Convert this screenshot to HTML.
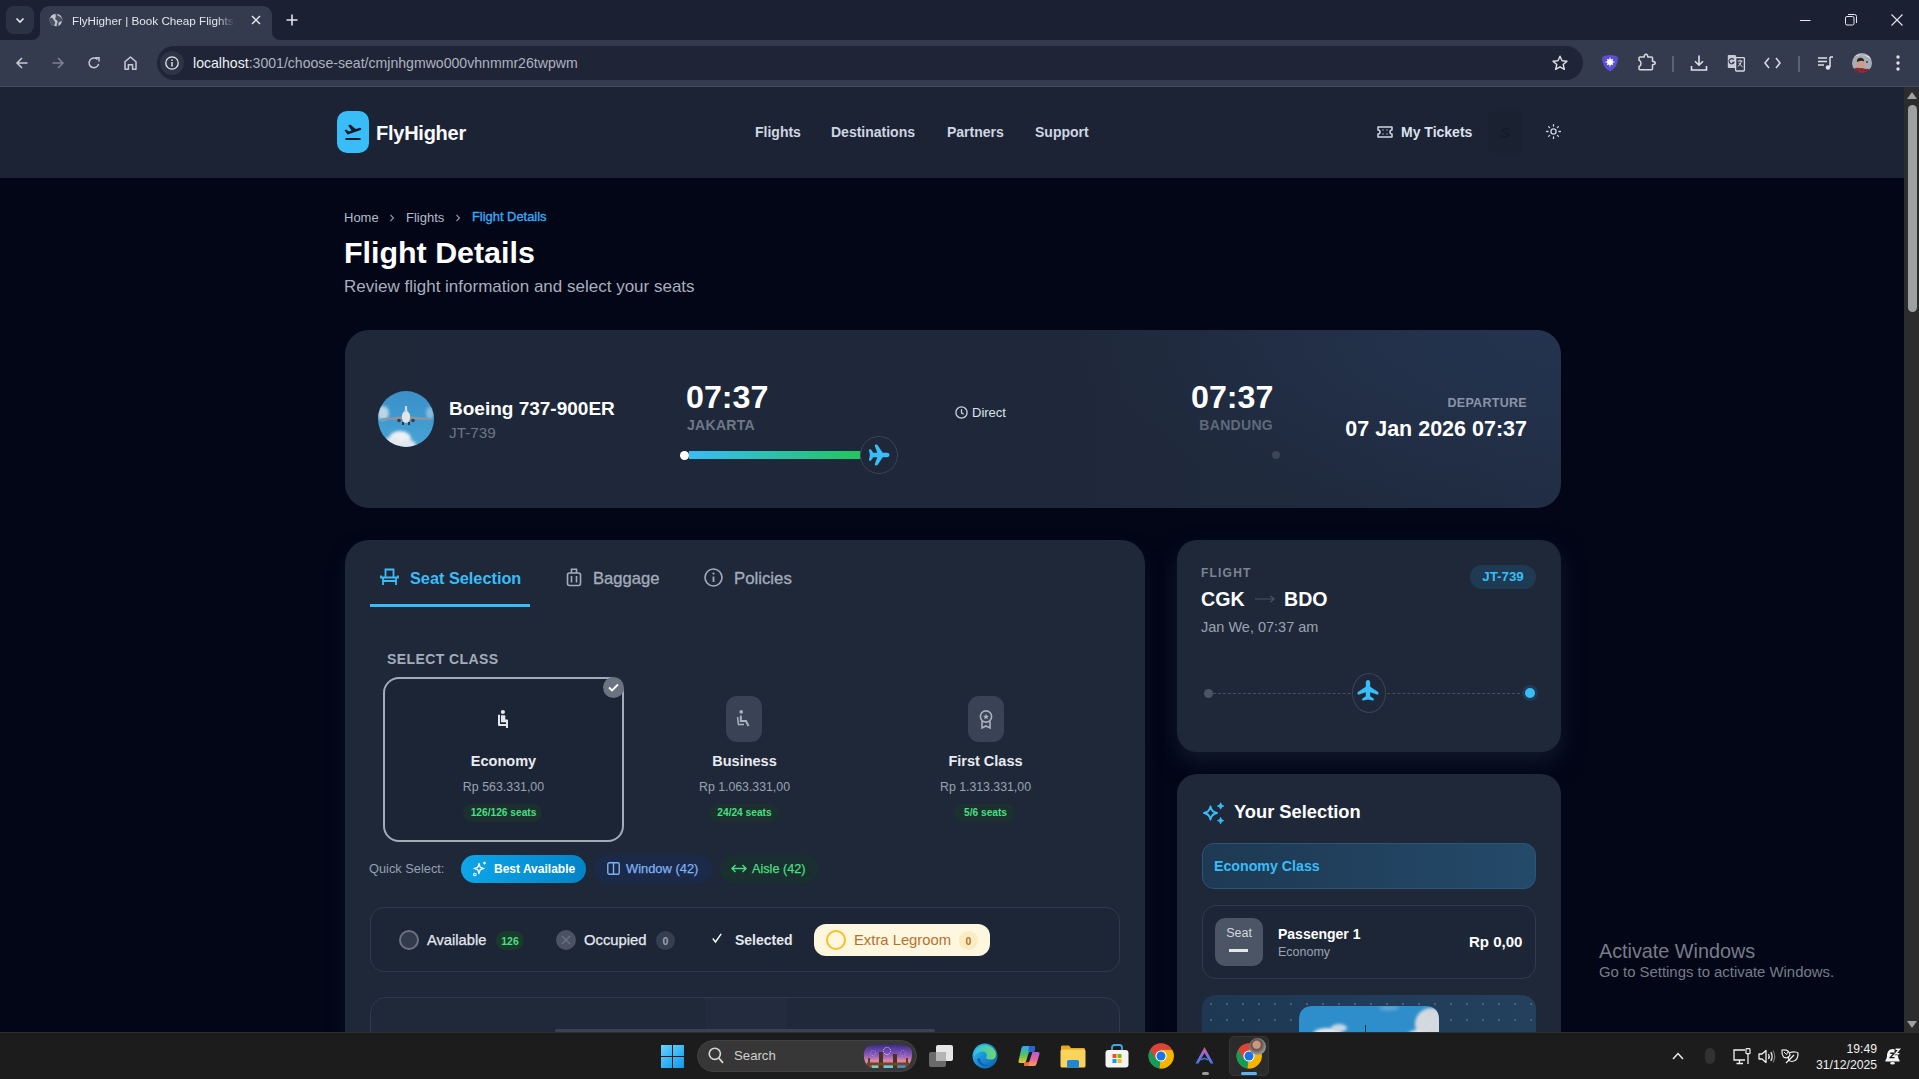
<!DOCTYPE html>
<html><head><meta charset="utf-8">
<style>
*{box-sizing:border-box;margin:0;padding:0}
html,body{width:1919px;height:1079px;overflow:hidden;background:#020617;font-family:"Liberation Sans",sans-serif}
.a{position:absolute}
.t{position:absolute;white-space:nowrap;line-height:1}
svg{position:absolute;overflow:visible}
/* chrome */
#tabstrip{left:0;top:0;width:1919px;height:40px;background:#1b2133}
#toolbar{left:0;top:40px;width:1919px;height:47px;background:#343b4e;border-bottom:1px solid #454c5e}
#omni{left:157px;top:46px;width:1426px;height:34px;border-radius:17px;background:#1f2536}
/* page */
#page{left:0;top:87px;width:1904px;height:945px;background:#020617;overflow:hidden}
#nav{left:0;top:0;width:1904px;height:91px;background:#1b2334}
#scroll{left:1904px;top:87px;width:15px;height:945px;background:#2c2c2c}
#taskbar{left:0;top:1032px;width:1919px;height:47px;background:#1c1c1c;border-top:1px solid #2e2e2e}
.card{position:absolute;background:#1e2637;border-radius:28px}
</style></head>
<body>
<!-- ============ BROWSER CHROME ============ -->
<div id="tabstrip" class="a"></div>
<div class="a" style="left:6px;top:6px;width:28px;height:28px;border-radius:8px;background:#2b3244"></div>
<svg style="left:14px;top:14px" width="12" height="12" viewBox="0 0 12 12"><path d="M2.5 4.5 L6 8 L9.5 4.5" fill="none" stroke="#e6e8ee" stroke-width="1.6"/></svg>
<!-- active tab -->
<div class="a" style="left:40px;top:6px;width:232px;height:40px;background:#343b4e;border-radius:9px 9px 0 0"></div>
<div class="a" style="left:32px;top:32px;width:8px;height:8px;background:#343b4e"></div>
<div class="a" style="left:32px;top:30px;width:8px;height:10px;background:#1b2133;border-radius:0 0 8px 0"></div>
<div class="a" style="left:272px;top:32px;width:8px;height:8px;background:#343b4e"></div>
<div class="a" style="left:272px;top:30px;width:8px;height:10px;background:#1b2133;border-radius:0 0 0 8px"></div>
<svg style="left:49px;top:13px" width="14" height="14" viewBox="0 0 14 14"><circle cx="7" cy="7" r="6.3" fill="#c4c7cf"/><path d="M1.2 5 C2.5 4.5 4 5 4.5 6.5 C5 8 6.5 8.2 6.2 10 C6 11.2 5.2 12 5.5 13.2 C3 12.6 1 10.2 0.9 7.3 Z M8.2 0.8 C8 2 8.8 3 10 3.2 C11.2 3.4 11.5 4.5 12.6 5 C13.2 6.2 13.2 7.5 13 8.5 C11.8 8.3 10.5 8.6 9.8 9.6 C9.2 10.5 9.8 11.8 9.4 13 C8.6 13.3 8 13.4 7.5 13.4 C8 12 7.5 10.6 8.3 9.5 C9 8.5 8.3 7.3 7.3 7 C6.2 6.8 6 5.6 6.5 4.6 C7 3.6 6.8 2 6.2 0.8 Z" fill="#343b4e" opacity="0.85"/></svg>
<div class="t" style="left:72px;top:15px;font-size:11.7px;color:#e3e5ea;width:168px;overflow:hidden;-webkit-mask-image:linear-gradient(90deg,#000 86%,transparent 97%)">FlyHigher | Book Cheap Flights for</div>
<svg style="left:251px;top:15px" width="10" height="10" viewBox="0 0 10 10"><path d="M1 1 L9 9 M9 1 L1 9" stroke="#e3e5ea" stroke-width="1.5"/></svg>
<svg style="left:286px;top:14px" width="12" height="12" viewBox="0 0 12 12"><path d="M6 0.5 V11.5 M0.5 6 H11.5" stroke="#e3e5ea" stroke-width="1.6"/></svg>
<!-- window controls -->
<svg style="left:1800px;top:15px" width="11" height="10" viewBox="0 0 11 10"><path d="M0 5.5 H10.5" stroke="#e6e8ee" stroke-width="1"/></svg>
<svg style="left:1845px;top:14px" width="12" height="12" viewBox="0 0 12 12"><rect x="0.5" y="2.5" width="8.5" height="8.5" rx="1.5" fill="none" stroke="#e6e8ee" stroke-width="1"/><path d="M3 0.5 H9.5 Q11.5 0.5 11.5 2.5 V9" fill="none" stroke="#e6e8ee" stroke-width="1"/></svg>
<svg style="left:1891px;top:14px" width="12" height="12" viewBox="0 0 12 12"><path d="M0.5 0.5 L11.5 11.5 M11.5 0.5 L0.5 11.5" stroke="#e6e8ee" stroke-width="1.1"/></svg>

<div id="toolbar" class="a"></div>
<svg style="left:16px;top:57px" width="12" height="12" viewBox="0 0 12 12"><path d="M11.5 6 H1.5 M6 1 L1 6 L6 11" fill="none" stroke="#c8cbd3" stroke-width="1.5"/></svg>
<svg style="left:52px;top:57px" width="12" height="12" viewBox="0 0 12 12"><path d="M0.5 6 H10.5 M6 1 L11 6 L6 11" fill="none" stroke="#7d8391" stroke-width="1.5"/></svg>
<svg style="left:88px;top:57px" width="12" height="12" viewBox="0 0 12 12"><path d="M10.6 6.8 A4.8 4.8 0 1 1 9.4 2.6" fill="none" stroke="#c8cbd3" stroke-width="1.5"/><path d="M7.2 0.8 H11 V4.6" fill="none" stroke="#c8cbd3" stroke-width="1.5"/></svg>
<svg style="left:124px;top:56px" width="13" height="14" viewBox="0 0 13 14"><path d="M1 13.2 V5.8 L6.5 1 L12 5.8 V13.2 H8.6 V8.8 H4.4 V13.2 Z" fill="none" stroke="#c8cbd3" stroke-width="1.5" stroke-linejoin="round"/></svg>
<div id="omni" class="a"></div>
<div class="a" style="left:160px;top:51px;width:24px;height:24px;border-radius:12px;background:#2d3446"></div>
<svg style="left:165px;top:56px" width="14" height="14" viewBox="0 0 14 14"><circle cx="7" cy="7" r="6.2" fill="none" stroke="#e6e8ee" stroke-width="1.3"/><rect x="6.3" y="6" width="1.4" height="4.5" fill="#e6e8ee"/><rect x="6.3" y="3.4" width="1.4" height="1.5" fill="#e6e8ee"/></svg>
<div class="t" style="left:193px;top:56px;font-size:14.1px;color:#aeb3bf"><span style="color:#eef0f4">localhost</span>:3001/choose-seat/cmjnhgmwo000vhnmmr26twpwm</div>
<svg style="left:1552px;top:55px" width="16" height="16" viewBox="0 0 16 16"><path d="M8 1.2 L10 5.8 L15 6.2 L11.2 9.5 L12.4 14.4 L8 11.8 L3.6 14.4 L4.8 9.5 L1 6.2 L6 5.8 Z" fill="none" stroke="#dfe2e8" stroke-width="1.4" stroke-linejoin="round"/></svg>
<!-- extension icons -->
<svg style="left:1601px;top:54px" width="18" height="18" viewBox="0 0 18 18"><path d="M1 3 Q9 -1 17 3 Q17 13 9 17.5 Q1 13 1 3 Z" fill="#5b4fd6"/><circle cx="9" cy="8" r="3" fill="#fff"/><path d="M9 3.5 V12.5 M4.5 8 H13.5 M6 5 L12 11 M12 5 L6 11" stroke="#fff" stroke-width="0.9"/></svg>
<svg style="left:1637px;top:53px" width="20" height="18" viewBox="0 0 20 18"><path d="M3 4 H7.2 Q7.2 1.2 9 1.2 Q10.8 1.2 10.8 4 H14.5 Q15.5 4 15.5 5 V8.2 Q18.2 8.5 18.2 10 Q18.2 11.5 15.5 11.8 V15.8 Q15.5 16.8 14.5 16.8 H3 Q2 16.8 2 15.8 V13.5 Q4 12.8 4 10.4 Q4 8 2 7.3 V5 Q2 4 3 4 Z" fill="none" stroke="#d6d9e0" stroke-width="1.5" stroke-linejoin="round"/></svg>
<div class="a" style="left:1672px;top:56px;width:2px;height:16px;background:#5b6170"></div>
<svg style="left:1690px;top:54px" width="18" height="18" viewBox="0 0 18 18"><path d="M9 1.5 V11 M5 7.2 L9 11.2 L13 7.2 M1.5 12 V16 H16.5 V12" fill="none" stroke="#dfe2e8" stroke-width="1.6"/></svg>
<svg style="left:1727px;top:54px" width="19" height="18" viewBox="0 0 19 18"><path d="M1.5 1 H8.5 L9.5 3.5 V14 H1.5 Q0.8 14 0.8 13.3 V1.7 Q0.8 1 1.5 1 Z" fill="#c9ccd4"/><path d="M6.8 5.6 A2.6 2.6 0 1 0 7 8.4 H5.2" fill="none" stroke="#343b4e" stroke-width="1.2"/><rect x="8.6" y="3.6" width="8.8" height="13.4" rx="0.8" fill="#343b4e" stroke="#d6d9e0" stroke-width="1.3"/><path d="M10.8 7 H15.4 M13 5.8 V7 M14.6 7 Q13.5 11 10.8 12.4 M11.8 8.8 Q13 11.4 15.6 12.8" fill="none" stroke="#d6d9e0" stroke-width="1"/></svg>
<svg style="left:1764px;top:57px" width="17" height="12" viewBox="0 0 17 12"><path d="M5 1 L1 6 L5 11 M12 1 L16 6 L12 11" fill="none" stroke="#d6d9e0" stroke-width="1.6"/></svg>
<div class="a" style="left:1798px;top:56px;width:2px;height:16px;background:#5b6170"></div>
<svg style="left:1817px;top:55px" width="17" height="16" viewBox="0 0 17 16"><path d="M1 3 H10 M1 6.5 H10 M1 10 H7" stroke="#dfe2e8" stroke-width="1.5"/><path d="M13 2 V12" stroke="#dfe2e8" stroke-width="1.5"/><circle cx="11" cy="12.5" r="2.3" fill="#dfe2e8"/><path d="M13 2 H16" stroke="#dfe2e8" stroke-width="1.5"/></svg>
<svg style="left:1852px;top:53px" width="20" height="20" viewBox="0 0 20 20"><defs><clipPath id="avp"><circle cx="10" cy="10" r="10"/></clipPath><filter id="avb"><feGaussianBlur stdDeviation="0.6"/></filter></defs><g clip-path="url(#avp)" filter="url(#avb)"><rect width="20" height="20" fill="#a9adb4"/><path d="M2 4 Q10 -1 19 6 L19 3 L2 1 Z" fill="#e2e5e8"/><ellipse cx="8.5" cy="11.5" rx="3.6" ry="4.2" fill="#d39a86"/><path d="M4.8 9 Q5 4.8 8.5 4.8 Q12 4.8 12.2 8.5 Q10 6.8 5 9 Z" fill="#2a2526"/><path d="M0 20 Q1 14 7 15 Q11 14.5 14 16 Q19 15 20 20 Z" fill="#8c2f34"/><path d="M5 17 l1.5 1.5 M9 16.5 l1.5 1.5 M13 17 l1.5 1.5" stroke="#4a1a1c" stroke-width="0.9"/><circle cx="15" cy="9" r="1" fill="#3a3c40"/></g></svg>
<svg style="left:1896px;top:55px" width="4" height="16" viewBox="0 0 4 16"><circle cx="2" cy="2" r="1.7" fill="#dfe2e8"/><circle cx="2" cy="8" r="1.7" fill="#dfe2e8"/><circle cx="2" cy="14" r="1.7" fill="#dfe2e8"/></svg>

<!-- ============ PAGE ============ -->
<div id="page" class="a">
  <div id="nav" class="a"></div>
  <!-- logo -->
  <div class="a" style="left:337px;top:24px;width:32px;height:42px;border-radius:10px;background:#38bdf8"></div>
  <svg style="left:343px;top:37px" width="20" height="17" viewBox="0 0 20 17"><path d="M1.5 6.2 L3.2 5.4 L5.6 7.4 L8.6 6.4 L5.2 1.4 L7.3 0.6 L12.6 5.1 L16.3 3.9 C17.6 3.5 18.6 4.4 18.2 5.3 C17.9 6 17.1 6.3 16.3 6.6 L4.6 10.6 Z" fill="#0f172a"/><rect x="2.5" y="14" width="15" height="2" fill="#0f172a"/></svg>
  <div class="t" style="left:376px;top:36px;font-size:20px;font-weight:700;color:#f8fafc;letter-spacing:-0.25px">FlyHigher</div>
  <!-- nav links -->
  <div class="t" style="left:755px;top:38px;font-size:14px;font-weight:700;color:#cfd6e2">Flights</div>
  <div class="t" style="left:831px;top:38px;font-size:14px;font-weight:700;color:#cfd6e2">Destinations</div>
  <div class="t" style="left:947px;top:38px;font-size:14px;font-weight:700;color:#cfd6e2">Partners</div>
  <div class="t" style="left:1035px;top:38px;font-size:14px;font-weight:700;color:#cfd6e2">Support</div>
  <svg style="left:1377px;top:39px" width="16" height="12" viewBox="0 0 16 12"><path d="M1 1 H15 V4 A2 2 0 0 0 15 8 V11 H1 V8 A2 2 0 0 0 1 4 Z" fill="none" stroke="#cfd6e2" stroke-width="1.5" stroke-linejoin="round"/><path d="M6 3.5 V4.5 M6 7.5 V8.5 M10 3.5 V4.5 M10 7.5 V8.5" stroke="#cfd6e2" stroke-width="1.3"/></svg>
  <div class="t" style="left:1401px;top:38px;font-size:14px;font-weight:700;color:#dbe2ec">My Tickets</div>
  <div class="a" style="left:1488px;top:24px;width:34px;height:42px;border-radius:6px;background:#1a2131"></div>
  <div class="t" style="left:1500px;top:38px;font-size:15px;font-weight:700;font-style:italic;color:#151b29">S</div>
  <svg style="left:1546px;top:37px" width="15" height="15" viewBox="0 0 15 15"><circle cx="7.5" cy="7.5" r="2.6" fill="none" stroke="#cfd6e2" stroke-width="1.3"/><path d="M7.5 0.6 V2 M7.5 13 V14.4 M0.6 7.5 H2 M13 7.5 H14.4 M2.6 2.6 L3.6 3.6 M11.4 11.4 L12.4 12.4 M2.6 12.4 L3.6 11.4 M11.4 3.6 L12.4 2.6" stroke="#cfd6e2" stroke-width="1.3" stroke-linecap="round"/></svg>

  <!-- breadcrumb -->
  <div class="t" style="left:344px;top:124px;font-size:13px;color:#b4bccb">Home</div>
  <svg style="left:389px;top:127px" width="6" height="8" viewBox="0 0 6 8"><path d="M1.5 1 L4.5 4 L1.5 7" fill="none" stroke="#8b93a3" stroke-width="1.2"/></svg>
  <div class="t" style="left:406px;top:124px;font-size:13px;color:#b4bccb">Flights</div>
  <svg style="left:455px;top:127px" width="6" height="8" viewBox="0 0 6 8"><path d="M1.5 1 L4.5 4 L1.5 7" fill="none" stroke="#8b93a3" stroke-width="1.2"/></svg>
  <div class="t" style="left:472px;top:124px;font-size:12.9px;color:#3aa9f2;-webkit-text-stroke:0.35px #3aa9f2">Flight Details</div>
  <div class="t" style="left:344px;top:150px;font-size:30.4px;font-weight:700;color:#ffffff">Flight Details</div>
  <div class="t" style="left:344px;top:191px;font-size:17px;color:#a7afbd">Review flight information and select your seats</div>

  <!-- flight summary card -->
  <div class="a" style="left:345px;top:243px;width:1216px;height:178px;border-radius:24px;background:radial-gradient(ellipse 40% 110% at 100% 0%,rgba(36,52,80,0.95) 0%,rgba(36,52,80,0) 100%),linear-gradient(90deg,#1e2839 0%,#1f283a 60%,#202c42 100%)"></div>
  <svg style="left:378px;top:304px" width="56" height="56" viewBox="0 0 56 56"><defs><clipPath id="avc"><circle cx="28" cy="28" r="28"/></clipPath><linearGradient id="sky" x1="0" y1="0" x2="0" y2="1"><stop offset="0" stop-color="#3c8fc8"/><stop offset="0.5" stop-color="#3e9ad0"/><stop offset="1" stop-color="#4aa3d4"/></linearGradient><filter id="bl" x="-50%" y="-50%" width="200%" height="200%"><feGaussianBlur stdDeviation="1.6"/></filter><filter id="bl2"><feGaussianBlur stdDeviation="0.5"/></filter></defs><g clip-path="url(#avc)"><rect width="56" height="56" fill="url(#sky)"/><g filter="url(#bl)"><ellipse cx="22" cy="48" rx="11" ry="8" fill="#eef0f4"/><ellipse cx="14" cy="52" rx="8" ry="6" fill="#e6e9ef"/><ellipse cx="30" cy="54" rx="8" ry="5" fill="#dfe6ee"/><ellipse cx="5" cy="22" rx="6" ry="7" fill="#c9dbe8" opacity="0.9"/><ellipse cx="52" cy="22" rx="4" ry="6" fill="#bcd4e6" opacity="0.6"/></g><g filter="url(#bl2)"><path d="M3 27.5 L22 25.5 L34 25.5 L53 27.5 L53 29 L34 28.5 L22 28.5 L3 29 Z" fill="#8d949c"/><ellipse cx="28" cy="26" rx="4.2" ry="6" fill="#e2e4e6"/><path d="M27 15 L29 15 L29.5 21 L26.5 21 Z" fill="#d0d4d8"/><circle cx="21" cy="29.5" r="1.8" fill="#3a3e44"/><circle cx="35" cy="29.5" r="1.8" fill="#3a3e44"/><path d="M24 31 h2 v3 h-2z M30 31 h2 v3 h-2z" fill="#2e3a44"/></g></g></svg>
  <div class="t" style="left:449px;top:312px;font-size:19px;font-weight:700;color:#ffffff">Boeing 737-900ER</div>
  <div class="t" style="left:449px;top:338px;font-size:15.3px;color:#6b7587">JT-739</div>

  <div class="t" style="left:686px;top:294px;font-size:32.2px;font-weight:700;color:#ffffff">07:37</div>
  <div class="t" style="left:687px;top:331px;font-size:14px;font-weight:700;color:#6f7889;letter-spacing:0.3px">JAKARTA</div>
  <div class="a" style="left:689px;top:364px;width:172px;height:8px;background:linear-gradient(90deg,#38bdf8,#22c55e)"></div>
  <div class="a" style="left:680px;top:364px;width:9px;height:9px;border-radius:5px;background:#fff"></div>
  <div class="a" style="left:860px;top:349px;width:38px;height:38px;border-radius:19px;border:1px solid #3a4357;background:#1e2839"></div>
  <svg style="left:868px;top:357px" width="22" height="22" viewBox="0 0 22 22"><g transform="rotate(90 11 11) translate(0 0.5)"><path d="M11 0 C12.3 0 13.2 1 13.2 2.5 V6.8 L20.8 11.8 C21.6 12.3 21.8 13.2 21.4 14 C21.1 14.6 20.4 14.8 19.8 14.6 L13.2 12.2 V16.2 L16.2 18.3 C16.8 18.7 17 19.4 16.7 20 C16.5 20.4 16 20.6 15.5 20.5 L11 19.6 L6.5 20.5 C6 20.6 5.5 20.4 5.3 20 C5 19.4 5.2 18.7 5.8 18.3 L8.8 16.2 V12.2 L2.2 14.6 C1.6 14.8 0.9 14.6 0.6 14 C0.2 13.2 0.4 12.3 1.2 11.8 L8.8 6.8 V2.5 C8.8 1 9.7 0 11 0 Z" fill="#38bdf8"/></g></svg>

  <svg style="left:955px;top:319px" width="13" height="13" viewBox="0 0 13 13"><circle cx="6.5" cy="6.5" r="5.6" fill="none" stroke="#cfd6e2" stroke-width="1.3"/><path d="M6.5 3.2 V6.8 L8.6 8.2" fill="none" stroke="#cfd6e2" stroke-width="1.3"/></svg>
  <div class="t" style="left:972px;top:319px;font-size:13px;color:#dbe2ec">Direct</div>

  <div class="t" style="left:1191px;top:294px;font-size:32.2px;font-weight:700;color:#ffffff">07:37</div>
  <div class="t" style="left:1073px;width:200px;text-align:right;top:331px;font-size:14px;font-weight:700;color:#5f697b;letter-spacing:0.3px">BANDUNG</div>
  <div class="a" style="left:1272px;top:364px;width:8px;height:8px;border-radius:4px;background:#3d4557"></div>

  <div class="t" style="left:1227px;width:300px;text-align:right;top:310px;font-size:12.5px;font-weight:700;color:#8c95a6;letter-spacing:0.3px">DEPARTURE</div>
  <div class="t" style="left:1227px;width:300px;text-align:right;top:332px;font-size:21.5px;font-weight:700;color:#ffffff">07 Jan 2026 07:37</div>
  <!-- ===== main panel ===== -->
  <div class="a" style="left:345px;top:453px;width:800px;height:520px;border-radius:24px;background:#1f2839;box-shadow:0 8px 18px rgba(30,41,59,0.35)"></div>
  <!-- tabs -->
  <svg style="left:380px;top:481px" width="19" height="18" viewBox="0 0 19 18"><path d="M5.5 9 V1.5 H13.5 V9" fill="none" stroke="#38bdf8" stroke-width="1.8"/><path d="M1 7.5 V9.5 H18 V7.5 M3 9.5 V17 M16 9.5 V17 M3 13 H16" fill="none" stroke="#38bdf8" stroke-width="1.8"/></svg>
  <div class="t" style="left:410px;top:483px;font-size:16.3px;font-weight:700;color:#38bdf8">Seat Selection</div>
  <div class="a" style="left:370px;top:517px;width:160px;height:3px;background:#38bdf8"></div>
  <svg style="left:566px;top:481px" width="16" height="19" viewBox="0 0 16 19"><rect x="1.5" y="5" width="13" height="12.5" rx="2" fill="none" stroke="#a4acba" stroke-width="1.6"/><path d="M5.5 5 V1.2 H10.5 V5 M5.5 8 V14.5 M10.5 8 V14.5" fill="none" stroke="#a4acba" stroke-width="1.6"/></svg>
  <div class="t" style="left:593px;top:484px;font-size:16.6px;color:#a4acba;-webkit-text-stroke:0.3px #a4acba">Baggage</div>
  <svg style="left:704px;top:481px" width="19" height="19" viewBox="0 0 19 19"><circle cx="9.5" cy="9.5" r="8.5" fill="none" stroke="#a4acba" stroke-width="1.6"/><path d="M9.5 8.5 V14" stroke="#a4acba" stroke-width="1.8"/><circle cx="9.5" cy="5.6" r="1.1" fill="#a4acba"/></svg>
  <div class="t" style="left:734px;top:484px;font-size:16.8px;color:#a4acba;-webkit-text-stroke:0.3px #a4acba">Policies</div>

  <div class="t" style="left:387px;top:565px;font-size:14px;font-weight:700;color:#a4acba;letter-spacing:0.42px">SELECT CLASS</div>
  <!-- economy card -->
  <div class="a" style="left:383px;top:590px;width:241px;height:165px;border-radius:16px;border:2px solid #a3abb9;background:#1c2535"></div>
  <div class="a" style="left:603px;top:590px;width:21px;height:21px;border-radius:11px;background:#6b7280"></div>
  <svg style="left:608px;top:596px" width="11" height="9" viewBox="0 0 11 9"><path d="M1 4.5 L4 7.5 L10 1.5" fill="none" stroke="#fff" stroke-width="1.8"/></svg>
  <svg style="left:495px;top:621px" width="16" height="21" viewBox="0 0 16 21"><circle cx="7.9" cy="4" r="2.1" fill="#e5e7eb"/><path d="M4 6.8 V17 H12 V20" fill="none" stroke="#e5e7eb" stroke-width="2" stroke-linejoin="round"/><path d="M6 7.2 H9.6 Q10.3 7.2 10.3 8 V11.4 H12.2 Q13 11.4 13 12.2 V17 H11 V14.3 H6 Z" fill="#e5e7eb"/></svg>
  <div class="t" style="left:383px;width:241px;text-align:center;top:667px;font-size:14.5px;font-weight:700;color:#e8ebf0">Economy</div>
  <div class="t" style="left:383px;width:241px;text-align:center;top:694px;font-size:12.4px;color:#9aa3b2">Rp 563.331,00</div>
  <div class="a" style="left:463px;top:717px;width:79px;height:18px;border-radius:9px;background:#1b302f"></div>
  <div class="t" style="left:383px;width:241px;text-align:center;top:721px;font-size:10.2px;font-weight:700;color:#4ade80">126/126 seats</div>
  <!-- business -->
  <div class="a" style="left:726px;top:609px;width:36px;height:46px;border-radius:11px;background:#394355"></div>
  <svg style="left:736px;top:623px" width="17" height="18" viewBox="0 0 17 18"><circle cx="5.2" cy="1.9" r="1.8" fill="#aab2bf"/><path d="M4.8 5.5 V11 H10 L12.5 16" fill="none" stroke="#aab2bf" stroke-width="2"/><path d="M1.5 7 L2.5 14.5 H8" fill="none" stroke="#aab2bf" stroke-width="1.5"/></svg>
  <div class="t" style="left:624px;width:241px;text-align:center;top:667px;font-size:14.5px;font-weight:700;color:#e8ebf0">Business</div>
  <div class="t" style="left:624px;width:241px;text-align:center;top:694px;font-size:12.3px;color:#9aa3b2">Rp 1.063.331,00</div>
  <div class="a" style="left:709px;top:717px;width:70px;height:18px;border-radius:9px;background:#1b302f"></div>
  <div class="t" style="left:624px;width:241px;text-align:center;top:721px;font-size:10.2px;font-weight:700;color:#4ade80">24/24 seats</div>
  <!-- first -->
  <div class="a" style="left:968px;top:609px;width:36px;height:46px;border-radius:11px;background:#394355"></div>
  <svg style="left:978px;top:623px" width="16" height="19" viewBox="0 0 16 19"><circle cx="8" cy="6.5" r="5.6" fill="none" stroke="#aab2bf" stroke-width="1.6"/><path d="M8 3.8 L8.9 5.7 L10.9 5.9 L9.4 7.2 L9.8 9.2 L8 8.2 L6.2 9.2 L6.6 7.2 L5.1 5.9 L7.1 5.7 Z" fill="#aab2bf"/><path d="M4 11 V18 L8 16 L12 18 V11" fill="none" stroke="#aab2bf" stroke-width="1.6"/></svg>
  <div class="t" style="left:865px;width:241px;text-align:center;top:667px;font-size:14.5px;font-weight:700;color:#e8ebf0">First Class</div>
  <div class="t" style="left:865px;width:241px;text-align:center;top:694px;font-size:12.3px;color:#9aa3b2">Rp 1.313.331,00</div>
  <div class="a" style="left:954px;top:717px;width:62px;height:18px;border-radius:9px;background:#1b302f"></div>
  <div class="t" style="left:865px;width:241px;text-align:center;top:721px;font-size:10.2px;font-weight:700;color:#4ade80">5/6 seats</div>

  <!-- quick select -->
  <div class="t" style="left:369px;top:776px;font-size:12.8px;color:#94a0b0">Quick Select:</div>
  <div class="a" style="left:461px;top:768px;width:125px;height:28px;border-radius:14px;background:linear-gradient(90deg,#0ea5e9,#0284c7)"></div>
  <svg style="left:472px;top:774px" width="16" height="16" viewBox="0 0 16 16"><path d="M7 2.5 L8.2 6.3 L12 7.5 L8.2 8.7 L7 12.5 L5.8 8.7 L2 7.5 L5.8 6.3 Z" fill="none" stroke="#fff" stroke-width="1.3" stroke-linejoin="round"/><path d="M12.5 0.8 V3.6 M11.1 2.2 H13.9" stroke="#fff" stroke-width="1.2"/><circle cx="2.8" cy="13.5" r="1.3" fill="none" stroke="#fff" stroke-width="1.1"/></svg>
  <div class="t" style="left:494px;top:776px;font-size:12px;font-weight:700;color:#ffffff">Best Available</div>
  <div class="a" style="left:594px;top:768px;width:118px;height:28px;border-radius:14px;background:#1b2a48"></div>
  <svg style="left:607px;top:775px" width="13" height="13" viewBox="0 0 13 13"><rect x="0.8" y="0.8" width="11.4" height="11.4" rx="1.5" fill="none" stroke="#7fb2f5" stroke-width="1.4"/><path d="M6.5 0.8 V12.2" stroke="#7fb2f5" stroke-width="1.4"/></svg>
  <div class="t" style="left:626px;top:776px;font-size:12.9px;color:#7fb2f5;-webkit-text-stroke:0.25px #7fb2f5">Window (42)</div>
  <div class="a" style="left:720px;top:768px;width:98px;height:28px;border-radius:14px;background:#1a3030"></div>
  <svg style="left:731px;top:776px" width="16" height="11" viewBox="0 0 16 11"><path d="M1 5.5 H15 M4.5 2 L1 5.5 L4.5 9 M11.5 2 L15 5.5 L11.5 9" fill="none" stroke="#4ade80" stroke-width="1.4"/></svg>
  <div class="t" style="left:752px;top:776px;font-size:12.7px;color:#4ade80;-webkit-text-stroke:0.25px #4ade80">Aisle (42)</div>

  <!-- legend -->
  <div class="a" style="left:370px;top:820px;width:750px;height:65px;border-radius:14px;border:1px solid #313a4c;background:#1d2636"></div>
  <div class="a" style="left:399px;top:843px;width:20px;height:20px;border-radius:10px;border:2px solid #6b7280;background:#323b4b"></div>
  <div class="t" style="left:427px;top:846px;font-size:14.7px;color:#e5e8ee;-webkit-text-stroke:0.25px #e5e8ee">Available</div>
  <div class="a" style="left:496px;top:844px;width:28px;height:19px;border-radius:10px;background:#1a3a2c"></div>
  <div class="t" style="left:496px;width:28px;text-align:center;top:849px;font-size:10.5px;font-weight:700;color:#4ade80">126</div>
  <div class="a" style="left:556px;top:843px;width:20px;height:20px;border-radius:10px;background:#4b5363"></div>
  <svg style="left:560px;top:847px" width="12" height="12" viewBox="0 0 12 12"><path d="M2 2 L10 10 M10 2 L2 10" stroke="#6b7383" stroke-width="1.2"/></svg>
  <div class="t" style="left:584px;top:846px;font-size:14.8px;color:#e5e8ee;-webkit-text-stroke:0.25px #e5e8ee">Occupied</div>
  <div class="a" style="left:656px;top:844px;width:19px;height:19px;border-radius:10px;background:#363f50"></div>
  <div class="t" style="left:656px;width:19px;text-align:center;top:849px;font-size:10.5px;font-weight:700;color:#9ca3af">0</div>
  <svg style="left:712px;top:846px" width="10" height="10" viewBox="0 0 10 10"><path d="M0.8 5.5 L3.5 9 L9.2 0.8" fill="none" stroke="#ffffff" stroke-width="1.4"/></svg>
  <div class="t" style="left:735px;top:846px;font-size:14px;font-weight:700;color:#e5e8ee">Selected</div>
  <div class="a" style="left:814px;top:837px;width:176px;height:32px;border-radius:12px;background:#fdf7e0"></div>
  <div class="a" style="left:826px;top:843px;width:20px;height:20px;border-radius:10px;border:2px solid #fbbf24"></div>
  <div class="t" style="left:854px;top:846px;font-size:14.8px;color:#b7702c">Extra Legroom</div>
  <div class="a" style="left:959px;top:844px;width:19px;height:19px;border-radius:10px;background:#fcecc2"></div>
  <div class="t" style="left:959px;width:19px;text-align:center;top:849px;font-size:10.5px;font-weight:700;color:#b7702c">0</div>

  <!-- seatmap box (cut) -->
  <div class="a" style="left:370px;top:910px;width:750px;height:60px;border-radius:16px;border:1px solid #313a4c;background:#1f293a"></div>
  <div class="a" style="left:705px;top:911px;width:82px;height:34px;background:#222c3e"></div>
  <div class="a" style="left:555px;top:942px;width:380px;height:3px;border-radius:2px;background:#3a4356"></div>

  <!-- ===== right column ===== -->
  <div class="a" style="left:1177px;top:453px;width:384px;height:212px;border-radius:20px;background:#1f2839;box-shadow:0 10px 22px rgba(30,41,59,0.55)"></div>
  <div class="t" style="left:1201px;top:480px;font-size:12px;font-weight:700;color:#7b8494;letter-spacing:1.2px">FLIGHT</div>
  <div class="a" style="left:1470px;top:478px;width:66px;height:24px;border-radius:12px;background:#1f3b53"></div>
  <div class="t" style="left:1470px;width:66px;text-align:center;top:483px;font-size:13.3px;font-weight:700;color:#38bdf8">JT-739</div>
  <div class="t" style="left:1201px;top:503px;font-size:19.6px;font-weight:700;color:#ffffff">CGK</div>
  <svg style="left:1255px;top:508px" width="20" height="8" viewBox="0 0 20 8"><path d="M0 4 H19 M15.5 1 L19 4 L15.5 7" fill="none" stroke="#4b5465" stroke-width="1.2"/></svg>
  <div class="t" style="left:1284px;top:503px;font-size:19.6px;font-weight:700;color:#ffffff">BDO</div>
  <div class="t" style="left:1201px;top:533px;font-size:14.5px;color:#9aa3b2">Jan We, 07:37 am</div>
  <div class="a" style="left:1208px;top:606px;width:322px;height:0;border-top:1px dashed #475063"></div>
  <div class="a" style="left:1204px;top:602px;width:9px;height:9px;border-radius:5px;background:#4b5465"></div>
  <div class="a" style="left:1522px;top:598px;width:16px;height:16px;border-radius:8px;background:#1e3a55"></div>
  <div class="a" style="left:1525px;top:601px;width:10px;height:10px;border-radius:5px;background:#38bdf8"></div>
  <div class="a" style="left:1352px;top:586px;width:34px;height:40px;border-radius:50%;border:1px solid #3a4357;background:#1f2839"></div>
  <svg style="left:1357px;top:593px" width="22" height="21" viewBox="0 0 22 21"><path d="M11 0 C12.3 0 13.2 1 13.2 2.5 V6.8 L20.8 11.8 C21.6 12.3 21.8 13.2 21.4 14 C21.1 14.6 20.4 14.8 19.8 14.6 L13.2 12.2 V16.2 L16.2 18.3 C16.8 18.7 17 19.4 16.7 20 C16.5 20.4 16 20.6 15.5 20.5 L11 19.6 L6.5 20.5 C6 20.6 5.5 20.4 5.3 20 C5 19.4 5.2 18.7 5.8 18.3 L8.8 16.2 V12.2 L2.2 14.6 C1.6 14.8 0.9 14.6 0.6 14 C0.2 13.2 0.4 12.3 1.2 11.8 L8.8 6.8 V2.5 C8.8 1 9.7 0 11 0 Z" fill="#38bdf8"/></svg>

  <div class="a" style="left:1177px;top:687px;width:384px;height:300px;border-radius:20px;background:#1f2839"></div>
  <svg style="left:1200px;top:715px" width="26" height="24" viewBox="0 0 26 24"><path d="M10.5 4.5 Q11.5 10 17 11 Q11.5 12 10.5 17.5 Q9.5 12 4 11 Q9.5 10 10.5 4.5 Z" fill="none" stroke="#38bdf8" stroke-width="1.8" stroke-linejoin="round"/><path d="M20.6 0.8 Q21 3.6 23.8 4 Q21 4.4 20.6 7.2 Q20.2 4.4 17.4 4 Q20.2 3.6 20.6 0.8 Z M20.6 15.4 Q21 18.2 23.8 18.6 Q21 19 20.6 21.8 Q20.2 19 17.4 18.6 Q20.2 18.2 20.6 15.4 Z" fill="#38bdf8" stroke="#38bdf8" stroke-width="0.8" stroke-linejoin="round"/></svg>
  <div class="t" style="left:1234px;top:716px;font-size:18.3px;font-weight:700;color:#ffffff">Your Selection</div>
  <div class="a" style="left:1202px;top:756px;width:334px;height:46px;border-radius:12px;border:1px solid #2c5677;background:linear-gradient(90deg,#1e3953,#244a6a)"></div>
  <div class="t" style="left:1214px;top:772px;font-size:14.2px;font-weight:700;color:#38bdf8">Economy Class</div>
  <div class="a" style="left:1202px;top:818px;width:334px;height:74px;border-radius:14px;border:1px solid #323b4d;background:#1d2636"></div>
  <div class="a" style="left:1215px;top:831px;width:48px;height:48px;border-radius:10px;background:#4b5565"></div>
  <div class="t" style="left:1215px;width:48px;text-align:center;top:840px;font-size:12.5px;color:#d4d8df">Seat</div>
  <div class="a" style="left:1229px;top:862px;width:19px;height:3px;background:#e5e7eb"></div>
  <div class="t" style="left:1278px;top:840px;font-size:14px;font-weight:700;color:#ffffff">Passenger 1</div>
  <div class="t" style="left:1278px;top:859px;font-size:12.5px;color:#9aa3b2">Economy</div>
  <div class="t" style="left:1469px;top:847px;font-size:15px;font-weight:700;color:#ffffff">Rp 0,00</div>
  <div class="a" style="left:1202px;top:908px;width:334px;height:60px;border-radius:14px;background-color:#1f3a55;background-image:radial-gradient(circle,#42617f 0.8px,transparent 1.3px),linear-gradient(90deg,#1e3853,#23405d);background-size:16px 16px,100% 100%;background-position:1px 1px,0 0"></div>
  <svg style="left:1299px;top:919px" width="140" height="30" viewBox="0 0 140 30"><defs><clipPath id="imc"><path d="M0 30 V14 Q0 0 14 0 H126 Q140 0 140 14 V30 Z"/></clipPath><filter id="cb"><feGaussianBlur stdDeviation="1.8"/></filter></defs><g clip-path="url(#imc)"><rect width="140" height="30" fill="#2d8ecb"/><g filter="url(#cb)"><ellipse cx="28" cy="28" rx="14" ry="6" fill="#e3e8ee"/><ellipse cx="40" cy="22" rx="8" ry="4" fill="#c9d6e2"/><ellipse cx="132" cy="18" rx="16" ry="16" fill="#d3d9de"/><ellipse cx="118" cy="30" rx="10" ry="6" fill="#e0e4e8"/><ellipse cx="90" cy="2" rx="10" ry="3" fill="#5aa3d6"/></g><rect x="66" y="19" width="1" height="11" fill="#26323e"/></g></svg>

  <!-- activate windows -->
  <div class="t" style="left:1599px;top:855px;font-size:19.8px;color:#777d88">Activate Windows</div>
  <div class="t" style="left:1599px;top:878px;font-size:14.9px;color:#777d88">Go to Settings to activate Windows.</div>
</div>
<div id="scroll" class="a"></div>
<svg style="left:1907px;top:92px" width="10" height="7" viewBox="0 0 10 7"><path d="M5 0 L10 7 H0 Z" fill="#a0a2a1"/></svg>
<div class="a" style="left:1908px;top:105px;width:9px;height:207px;border-radius:5px;background:#9fa1a0"></div>
<svg style="left:1907px;top:1021px" width="10" height="7" viewBox="0 0 10 7"><path d="M0 0 H10 L5 7 Z" fill="#a0a2a1"/></svg>
<!-- ============ TASKBAR ============ -->
<div id="taskbar" class="a"></div>
<!-- win logo -->
<div class="a" style="left:661px;top:1045px;width:11px;height:11px;background:linear-gradient(135deg,#6fd3ff,#2bb4f5)"></div>
<div class="a" style="left:673px;top:1045px;width:11px;height:11px;background:linear-gradient(135deg,#5ccbff,#1ea9f0)"></div>
<div class="a" style="left:661px;top:1057px;width:11px;height:11px;background:linear-gradient(135deg,#4fc4ff,#1aa3ee)"></div>
<div class="a" style="left:673px;top:1057px;width:11px;height:11px;background:linear-gradient(135deg,#3dbaf9,#0f96e6)"></div>
<!-- search -->
<div class="a" style="left:697px;top:1040px;width:220px;height:32px;border-radius:16px;background:#373737;border:1px solid #414141"></div>
<svg style="left:708px;top:1047px" width="16" height="17" viewBox="0 0 16 17"><circle cx="6.8" cy="6.8" r="5.6" fill="none" stroke="#d6d6d6" stroke-width="1.6"/><path d="M10.8 11 L15 15.8" stroke="#d6d6d6" stroke-width="1.8"/></svg>
<div class="t" style="left:734px;top:1049px;font-size:13.2px;color:#d0d0d0">Search</div>
<svg style="left:863px;top:1044px" width="50" height="25" viewBox="0 0 50 25"><defs><linearGradient id="thg" x1="0" y1="0" x2="0" y2="1"><stop offset="0" stop-color="#3b2a8c"/><stop offset="0.45" stop-color="#8a5ab8"/><stop offset="0.7" stop-color="#e28aa6"/><stop offset="1" stop-color="#8a6060"/></linearGradient><filter id="thb"><feGaussianBlur stdDeviation="0.45"/></filter></defs><g filter="url(#thb)"><path d="M6 2 Q25 -1 44 2 Q50 4 49 12 Q48 22 40 24 H10 Q2 22 1 14 Q0 4 6 2 Z" fill="url(#thg)"/><circle cx="24" cy="7" r="3.6" fill="none" stroke="#e6e0ff" stroke-width="1" stroke-dasharray="1 1"/><circle cx="10" cy="9" r="2.6" fill="none" stroke="#b8a8e8" stroke-width="0.8" stroke-dasharray="1 1"/><circle cx="40" cy="9" r="2.6" fill="none" stroke="#a898e0" stroke-width="0.8" stroke-dasharray="1 1"/><rect x="16" y="8" width="4" height="16" fill="#4a3222"/><rect x="30" y="10" width="4" height="14" fill="#4a3222"/><rect x="5" y="14" width="2" height="10" fill="#5a3a2a"/><rect x="43" y="14" width="2" height="10" fill="#5a3a2a"/><rect x="4" y="18.5" width="42" height="3" fill="#6a4a2a"/><rect x="9" y="21.5" width="6" height="2.5" fill="#6fd6b8"/><rect x="21" y="21.5" width="9" height="2.5" fill="#5fd0e0"/><rect x="35" y="21.5" width="7" height="2.5" fill="#3a90d0"/></g></svg>
<!-- task view -->
<div class="a" style="left:929px;top:1052px;width:17px;height:15px;border-radius:2px;background:#6a6a6a"></div>
<div class="a" style="left:936px;top:1045px;width:17px;height:16px;border-radius:2px;background:#e6e6e6"></div>
<div class="a" style="left:936px;top:1052px;width:10px;height:9px;background:#b4b4b4"></div>
<!-- edge -->
<svg style="left:972px;top:1043px" width="26" height="26" viewBox="0 0 26 26"><defs><linearGradient id="eg1" x1="0" y1="0" x2="1" y2="1"><stop offset="0" stop-color="#35c1f1"/><stop offset="0.5" stop-color="#1a8fd6"/><stop offset="1" stop-color="#0c59a4"/></linearGradient><linearGradient id="eg2" x1="0" y1="0" x2="1" y2="0"><stop offset="0" stop-color="#2cc3e8"/><stop offset="1" stop-color="#6fd66a"/></linearGradient></defs><circle cx="13" cy="13" r="12.5" fill="url(#eg1)"/><path d="M2 11 C4 3 13 0 19 4 C24 7 25 12 23 15 C21 17 16 17 14 15 C16 12 14 8 10 8.5 C6 9 3 12 2 14 Z" fill="url(#eg2)"/><path d="M8 15 C8 20 13 23 18 22 C13 25 6 22 5 16 Z" fill="#1460b0"/><circle cx="14" cy="14" r="3.5" fill="#1a2030" opacity="0.0"/></svg>
<!-- copilot -->
<svg style="left:1016px;top:1044px" width="26" height="24" viewBox="0 0 26 24"><defs><linearGradient id="cpl" x1="0" y1="0" x2="0" y2="1"><stop offset="0" stop-color="#27a9f2"/><stop offset="0.55" stop-color="#5cc25a"/><stop offset="1" stop-color="#f2c62e"/></linearGradient><linearGradient id="cpr" x1="0" y1="0" x2="0" y2="1"><stop offset="0" stop-color="#b05ce2"/><stop offset="0.5" stop-color="#e8619c"/><stop offset="1" stop-color="#f9a15a"/></linearGradient></defs><path d="M7.5 2 H17.5 Q19.5 2 19 4 L18.2 7.5 H14.5 Q13 7.5 12.6 9 L10 17.5 Q9.5 19 8 19 H4 Q2 19 2.5 17 L5.5 4 Q6 2 7.5 2 Z" fill="url(#cpl)"/><path d="M13 2 H17.5 Q19.5 2 19 4 L18.2 7.5 H12.2 Z" fill="#2b62d8"/><path d="M16.5 8 H22 Q24 8 23.5 10 L20.5 20 Q20 22 18 22 H9.5 Q7.5 22 8 20 L8.5 18.5 H11.5 Q13 18.5 13.5 17 Z" fill="url(#cpr)"/><path d="M8.5 18.5 H11.5 Q12.8 18.5 13.3 17.3 L12.5 21.5 Q12 22 11 22 H9.5 Q7.5 22 8 20 Z" fill="#ee6a3a"/></svg>
<!-- explorer -->
<svg style="left:1060px;top:1045px" width="26" height="23" viewBox="0 0 26 23"><path d="M1 2 C1 1 1.5 0.5 2.5 0.5 H9 L11 3 H23.5 C24.5 3 25 3.5 25 4.5 V6 H1 Z" fill="#e8a91b"/><rect x="0.5" y="4.5" width="25" height="18" rx="1.5" fill="#f9d45c"/><rect x="7" y="15" width="12" height="7.5" rx="1.5" fill="#1c86d8"/></svg>
<!-- store -->
<svg style="left:1105px;top:1044px" width="24" height="24" viewBox="0 0 24 24"><path d="M7 7 V3.5 C7 2 8 1 9.5 1 H14.5 C16 1 17 2 17 3.5 V7" fill="none" stroke="#3aa8e6" stroke-width="1.8"/><rect x="0.5" y="6" width="23" height="17.5" rx="3" fill="#f4f4f4"/><rect x="7.5" y="10" width="4" height="4" fill="#f25022"/><rect x="12.5" y="10" width="4" height="4" fill="#7fba00"/><rect x="7.5" y="15" width="4" height="4" fill="#00a4ef"/><rect x="12.5" y="15" width="4" height="4" fill="#ffb900"/></svg>
<!-- chrome -->
<svg style="left:1148px;top:1043px" width="26" height="26" viewBox="0 0 26 26"><circle cx="13" cy="13" r="12.5" fill="#db4437"/><path d="M13 13 L2.2 6.8 A12.5 12.5 0 0 0 11.5 25.4 Z" fill="#0f9d58"/><path d="M13 13 L11.5 25.4 A12.5 12.5 0 0 0 24.2 6.8 L13 6.8 Z" fill="#f4b400"/><path d="M13 6.8 H24.2 A12.5 12.5 0 0 0 2.2 6.8 L7.6 16 Z" fill="#db4437"/><circle cx="13" cy="13" r="5.6" fill="#fff"/><circle cx="13" cy="13" r="4.5" fill="#1a73e8"/></svg>
<!-- A app -->
<svg style="left:1195px;top:1047px" width="19" height="17" viewBox="0 0 19 17"><defs><linearGradient id="aa" x1="0" y1="0" x2="0" y2="1"><stop offset="0" stop-color="#e15a5a"/><stop offset="0.4" stop-color="#9a6ad8"/><stop offset="1" stop-color="#3a7ee8"/></linearGradient></defs><path d="M9.5 0 L18.5 16.5 L15.5 16.5 L9.5 6 L3.5 16.5 L0.5 16.5 Z" fill="url(#aa)"/><path d="M6 13 Q9.5 10 13 13" fill="none" stroke="#3a7ee8" stroke-width="1.5"/></svg>
<div class="a" style="left:1202px;top:1072px;width:7px;height:3px;border-radius:2px;background:#9a9a9a"></div>
<!-- active chrome -->
<div class="a" style="left:1229px;top:1036px;width:40px;height:40px;border-radius:5px;background:#2b2b2b;border:1px solid #363636"></div>
<svg style="left:1236px;top:1043px" width="26" height="26" viewBox="0 0 26 26"><circle cx="13" cy="13" r="12.5" fill="#db4437"/><path d="M13 13 L2.2 6.8 A12.5 12.5 0 0 0 11.5 25.4 Z" fill="#0f9d58"/><path d="M13 13 L11.5 25.4 A12.5 12.5 0 0 0 24.2 6.8 L13 6.8 Z" fill="#f4b400"/><path d="M13 6.8 H24.2 A12.5 12.5 0 0 0 2.2 6.8 L7.6 16 Z" fill="#db4437"/><circle cx="13" cy="13" r="5.6" fill="#fff"/><circle cx="13" cy="13" r="4.5" fill="#1a73e8"/></svg>
<div class="a" style="left:1249px;top:1038px;width:17px;height:17px;border-radius:9px;background:radial-gradient(circle at 45% 40%,#c79a80 0 25%,#6a5048 35%,#9a9a9a 70%,#5a5a5a 100%)"></div>
<div class="a" style="left:1241px;top:1072px;width:16px;height:3px;border-radius:2px;background:#5fb2f2"></div>
<!-- tray -->
<svg style="left:1672px;top:1052px" width="12" height="8" viewBox="0 0 12 8"><path d="M1 7 L6 1.5 L11 7" fill="none" stroke="#ececec" stroke-width="1.5"/></svg>
<div class="a" style="left:1705px;top:1048px;width:10px;height:16px;border-radius:5px;background:#323232"></div>
<svg style="left:1733px;top:1048px" width="18" height="17" viewBox="0 0 18 17"><path d="M12 2 H1 V12 H12" fill="none" stroke="#f0f0f0" stroke-width="1.3"/><path d="M6.5 12 V15 M3.5 15.5 H10" stroke="#f0f0f0" stroke-width="1.3"/><rect x="13" y="0.7" width="4" height="5" rx="0.8" fill="none" stroke="#f0f0f0" stroke-width="1.2"/><path d="M15 5.7 V16" stroke="#f0f0f0" stroke-width="1.3"/></svg>
<svg style="left:1758px;top:1049px" width="17" height="15" viewBox="0 0 17 15"><path d="M1 5 H4 L8 1.5 V13.5 L4 10 H1 Z" fill="none" stroke="#f0f0f0" stroke-width="1.3" stroke-linejoin="round"/><path d="M10.5 5 Q12 7.5 10.5 10 M12.8 3.2 Q15.5 7.5 12.8 11.8" fill="none" stroke="#f0f0f0" stroke-width="1.3"/><path d="M15 1.5 Q18.5 7.5 15 13.5" fill="none" stroke="#777" stroke-width="1.1"/></svg>
<svg style="left:1781px;top:1049px" width="18" height="15" viewBox="0 0 18 15"><path d="M1 1 C5 0.5 8.5 2 9 6 C8 9 5 9.5 2.5 8 C1 6 0.8 3 1 1 Z" fill="none" stroke="#f0f0f0" stroke-width="1.2"/><path d="M9 3.5 C12.5 2.5 16.5 3 17 4 C17.3 8.5 15.5 12.5 11 12.5 C8 12.5 6.8 10.2 7.5 7.5" fill="none" stroke="#f0f0f0" stroke-width="1.2"/><path d="M5 14 L13 6" stroke="#f0f0f0" stroke-width="1.2"/><path d="M3 3 L5.5 5.5 L7 3" fill="none" stroke="#f0f0f0" stroke-width="1"/></svg>
<div class="t" style="left:1820px;width:57px;text-align:right;top:1043px;font-size:12.2px;color:#f2f2f2">19:49</div>
<div class="t" style="left:1810px;width:67px;text-align:right;top:1059px;font-size:12.2px;color:#f2f2f2">31/12/2025</div>
<svg style="left:1884px;top:1048px" width="17" height="17" viewBox="0 0 17 17"><path d="M3 8 C3 3.8 5.2 1 8.8 1 C12.2 1 14 3.8 14 8 Q14 10.6 15.6 12.4 V13.4 H1.4 V12.4 Q3 10.6 3 8 Z" fill="#f4f4f4"/><ellipse cx="8.5" cy="15.2" rx="2.4" ry="1.3" fill="#f4f4f4"/><path d="M6.2 5.2 H10.3 L6.3 9.6 H10.5" fill="none" stroke="#1c1c1c" stroke-width="1.4"/><rect x="10.6" y="0" width="6.4" height="7.2" fill="#1c1c1c"/><path d="M11.6 1.3 H15.4 L11.6 5.8 H15.4" fill="none" stroke="#f4f4f4" stroke-width="1.5"/></svg>
</body></html>
